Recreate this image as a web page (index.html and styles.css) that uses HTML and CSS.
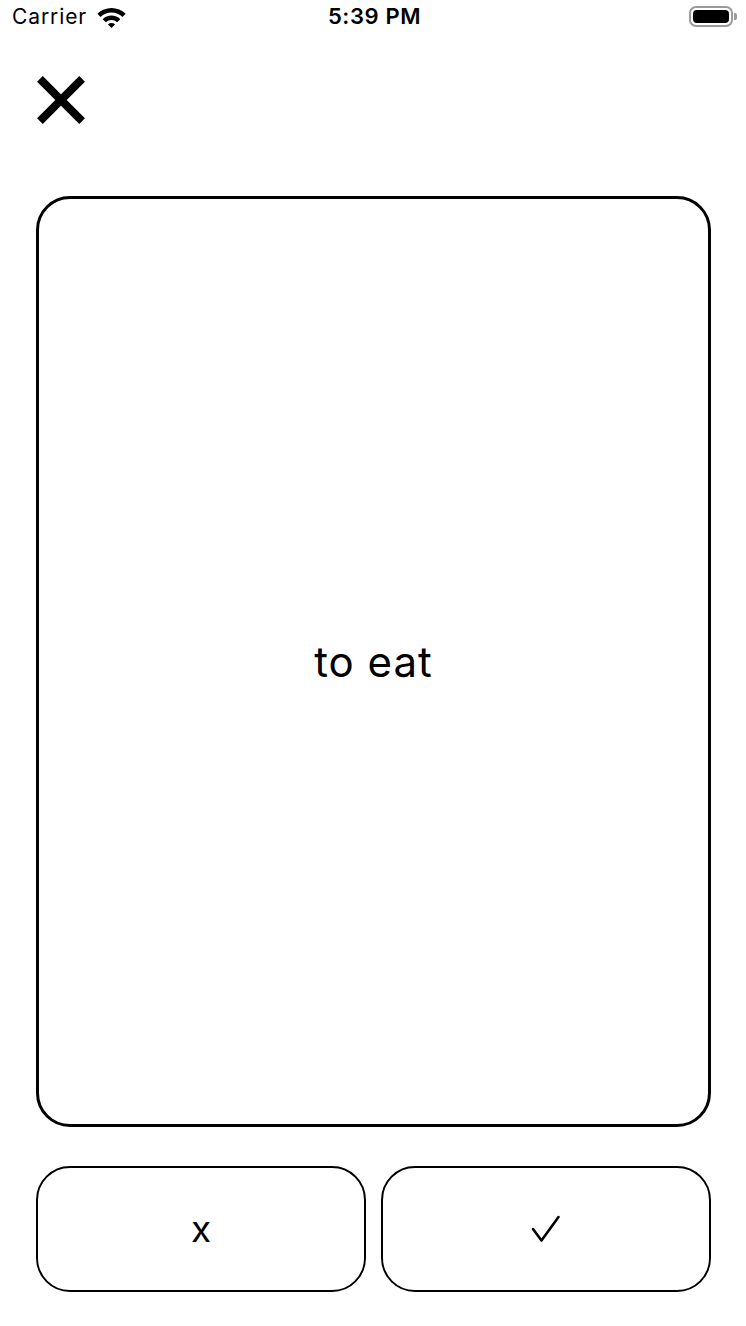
FILE: index.html
```html
<!DOCTYPE html>
<html lang="en">
<head>
<meta charset="utf-8">
<title>Flashcard</title>
<link rel="stylesheet" href="styles.css">
</head>
<body>
<div class="screen">
  <div class="status">
    <div class="status-left">
      <span class="carrier">Carrier</span>
      <svg class="wifi" width="29" height="20" viewBox="0 0 29 20" aria-hidden="true">
        <path d="M0.36 5.86 A20 20 0 0 1 28.64 5.86 L25.46 9.04 A15.5 15.5 0 0 0 3.54 9.04 Z" fill="#000"/>
        <path d="M5.66 11.16 A12.5 12.5 0 0 1 23.34 11.16 L20.16 14.34 A8 8 0 0 0 8.84 14.34 Z" fill="#000"/>
        <path d="M14.5 20 L10.96 16.46 A5 5 0 0 1 18.04 16.46 Z" fill="#000"/>
      </svg>
    </div>
    <div class="time">5:39 PM</div>
    <div class="status-right">
      <div class="battery"><div class="battery-fill"></div></div>
      <div class="battery-nub"></div>
    </div>
  </div>

  <div class="toolbar">
    <button class="close" aria-label="Close">
      <svg width="48" height="48" viewBox="0 0 48 48" aria-hidden="true">
        <line x1="2.9" y1="2.9" x2="45.1" y2="45.1" stroke="#000" stroke-width="8"/>
        <line x1="45.1" y1="2.9" x2="2.9" y2="45.1" stroke="#000" stroke-width="8"/>
      </svg>
    </button>
  </div>

  <div class="card">
    <span class="word">to eat</span>
  </div>

  <div class="actions">
    <button class="answer"><span class="answer-x">x</span></button>
    <button class="answer" aria-label="✓">
      <svg width="30" height="28" viewBox="0 0 30 28" aria-hidden="true">
        <polyline points="2,14 10.5,25.5 27.5,2" fill="none" stroke="#000" stroke-width="2.6" stroke-linecap="round" stroke-linejoin="round"/>
      </svg>
    </button>
  </div>
</div>
</body>
</html>
```
FILE: styles.css
```css
* {
  box-sizing: border-box;
}

html, body {
  margin: 0;
  padding: 0;
  background: #fff;
}

body {
  font-family: Inter, "Noto Sans", "Liberation Sans", sans-serif;
  color: #000;
}

.screen {
  width: 746px;
  height: 1326px;
  display: flex;
  flex-direction: column;
}

.status {
  height: 32px;
  display: grid;
  grid-template-columns: 1fr auto 1fr;
  align-items: center;
  padding: 0 9px 0 12px;
}

.status-left {
  display: flex;
  align-items: center;
  gap: 10px;
}

.carrier {
  font-size: 21px;
  font-weight: 400;
  letter-spacing: 0.9px;
}

.wifi {
  display: block;
  margin-top: 3px;
}

.time {
  font-size: 22px;
  font-weight: 600;
  letter-spacing: 0.6px;
}

.status-right {
  display: flex;
  justify-content: flex-end;
  align-items: center;
  gap: 1px;
}

.battery {
  width: 44px;
  height: 21px;
  border: 2px solid #9a9a9a;
  border-radius: 7px;
  padding: 2px;
}

.battery-fill {
  width: 100%;
  height: 100%;
  background: #000;
  border-radius: 4px;
}

.battery-nub {
  width: 3px;
  height: 7px;
  background: #9a9a9a;
  border-radius: 0 2px 2px 0;
}

.toolbar {
  padding: 44px 0 0 37px;
  height: 92px;
}

.close {
  display: block;
  border: 0;
  padding: 0;
  margin: 0;
  background: none;
  width: 48px;
  height: 48px;
}

.close svg {
  display: block;
}

.card {
  margin: 72px 35px 0 36px;
  height: 931px;
  border: 3px solid #000;
  border-radius: 34px;
  display: flex;
  align-items: center;
  justify-content: center;
}

.word {
  font-size: 42px;
  font-weight: 400;
  letter-spacing: 1px;
}

.actions {
  margin: 39px 35px 0 36px;
  height: 126px;
  display: grid;
  grid-template-columns: 1fr 1fr;
  gap: 15px;
}

.answer {
  background: #fff;
  border: 2px solid #000;
  border-radius: 34px;
  padding: 0;
  margin: 0;
  display: flex;
  align-items: center;
  justify-content: center;
  font-family: Inter, "Noto Sans", "Liberation Sans", sans-serif;
  color: #000;
}

.answer-x {
  font-size: 37px;
  font-weight: 400;
  line-height: 1;
  margin-top: -1px;
}

.answer svg {
  display: block;
}
```
